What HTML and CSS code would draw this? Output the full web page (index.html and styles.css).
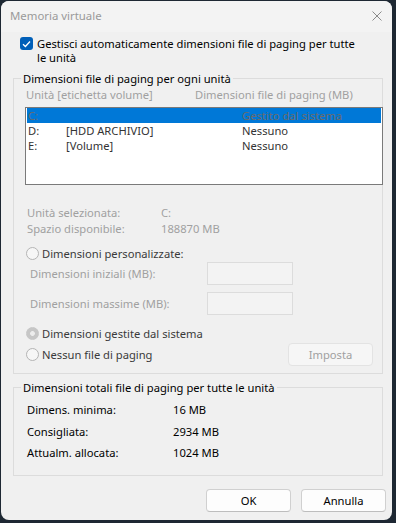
FILE: index.html
```html
<!DOCTYPE html>
<html lang="it">
<head>
    <meta charset="UTF-8">
    <title>Memoria virtuale</title>
    <link rel="stylesheet" href="styles.css">
</head>
<body>

<div class="window">
    <div class="titlebar">
        <span class="title">Memoria virtuale</span>
        <svg class="close" width="10" height="10" viewBox="0 0 10 10">
            <path d="M0.5 0.5 L9.5 9.5 M9.5 0.5 L0.5 9.5" stroke="#8a8a8a" stroke-width="1" fill="none"/>
        </svg>
    </div>

    <div class="content">
        <label class="auto-check">
            <span class="checkbox">
                <svg width="9" height="8" viewBox="0 0 9 8">
                    <path d="M1 4.2 L3.4 6.5 L8 1.5" stroke="#fff" stroke-width="1.3" fill="none"/>
                </svg>
            </span>
            <span>Gestisci automaticamente dimensioni file di paging per tutte le unità</span>
        </label>

        <fieldset class="group group-drives">
            <legend>Dimensioni file di paging per ogni unità</legend>
            <div class="list-head">
                <span class="col-drive">Unità [etichetta volume]</span>
                <span class="col-size">Dimensioni file di paging (MB)</span>
            </div>
            <div class="listbox">
                <div class="row selected">
                    <span class="c-drive">C:</span><span class="c-label"></span><span class="c-size">Gestito dal sistema</span>
                </div>
                <div class="row">
                    <span class="c-drive">D:</span><span class="c-label">[HDD ARCHIVIO]</span><span class="c-size">Nessuno</span>
                </div>
                <div class="row">
                    <span class="c-drive">E:</span><span class="c-label">[Volume]</span><span class="c-size">Nessuno</span>
                </div>
            </div>

            <div class="info">
                <div class="info-row"><span class="info-key">Unità selezionata:</span><span>C:</span></div>
                <div class="info-row"><span class="info-key">Spazio disponibile:</span><span>188870 MB</span></div>
            </div>

            <div class="radio-row first">
                <span class="radio"></span><span class="radio-text">Dimensioni personalizzate:</span>
            </div>
            <div class="field-row">
                <span class="field-label">Dimensioni iniziali (MB):</span><span class="textbox"></span>
            </div>
            <div class="field-row second">
                <span class="field-label">Dimensioni massime (MB):</span><span class="textbox"></span>
            </div>
            <div class="radio-row system">
                <span class="radio on"></span><span class="radio-text">Dimensioni gestite dal sistema</span>
            </div>
            <div class="radio-row last">
                <span class="radio"></span><span class="radio-text">Nessun file di paging</span>
                <button class="btn btn-set" disabled>Imposta</button>
            </div>
        </fieldset>

        <fieldset class="group group-total">
            <legend>Dimensioni totali file di paging per tutte le unità</legend>
            <div class="total-row"><span class="total-key">Dimens. minima:</span><span>16 MB</span></div>
            <div class="total-row"><span class="total-key">Consigliata:</span><span>2934 MB</span></div>
            <div class="total-row"><span class="total-key">Attualm. allocata:</span><span>1024 MB</span></div>
        </fieldset>

        <div class="actions">
            <button class="btn">OK</button>
            <button class="btn">Annulla</button>
        </div>
    </div>
</div>

</body>
</html>
```

FILE: styles.css
```css
body {
    margin: 0;
    background: #1e2833;
    font-family: "Noto Sans", Arial, sans-serif;
    font-size: 11.2px;
    color: #000;
}

.window {
    margin: 1px 0 0 1px;
    width: 391px;
    height: 519px;
    background-color: #f0f0f0;
    border-radius: 8px;
    overflow: hidden;
}

.titlebar {
    height: 31px;
    display: flex;
    align-items: center;
    justify-content: space-between;
    padding: 0 9px 0 9px;
    background-color: #f3f3f3;
    box-sizing: border-box;
    font-size: 11.4px;
}

.title {
    color: #9a9a9a;
    margin-top: -2px;
}

.close {
    margin-right: 1px;
    margin-top: -2px;
}

.content {
    padding: 0 9px 0 12px;
}

.auto-check {
    display: flex;
    align-items: flex-start;
    margin-top: 5px;
    padding-left: 7px;
    line-height: 14px;
    padding-right: 20px;
}

.checkbox {
    flex: none;
    width: 13px;
    height: 13px;
    border-radius: 3px;
    background-color: #005fb8;
    display: flex;
    align-items: center;
    justify-content: center;
    margin-top: 0;
    margin-right: 4px;
}

.group {
    margin: 0;
    border: 1px solid #dcdcdc;
    min-width: 0;
}

.group legend {
    padding: 0 2px;
    margin-left: -6px;
    line-height: 15px;
}

.group-drives {
    margin-top: 6px;
    padding: 1px 0 7px 13px;
}

.list-head {
    display: flex;
    line-height: 15px;
    color: #a0a0a0;
}

.col-drive {
    width: 169px;
    margin-left: -1px;
}

.listbox {
    margin-top: 5px;
    margin-left: -2px;
    width: 358px;
    height: 78px;
    box-sizing: border-box;
    border: 1px solid #7a7a7a;
    background-color: #fff;
    padding: 0 1px 1px;
}

.row {
    display: flex;
    height: 15px;
    line-height: 15px;
    color: #333;
}

.row.selected {
    background-color: #0078d7;
    color: #6b6b6b;
}

.c-drive {
    width: 38px;
    padding-left: 1px;
}

.c-label {
    width: 176px;
}

.info {
    margin-top: 20px;
    color: #a0a0a0;
}

.info-row {
    display: flex;
    line-height: 16px;
}

.info-key {
    width: 134px;
}

.radio-row {
    display: flex;
    align-items: center;
    height: 16px;
    margin-left: -1px;
    color: #3a3a3a;
}

.radio-row.first {
    margin-top: 8px;
}

.radio-row.system {
    margin-top: 10px;
}

.radio-row.last {
    margin-top: 2px;
    height: 23px;
    padding-right: 9px;
}

.radio {
    flex: none;
    width: 11px;
    height: 11px;
    border-radius: 50%;
    border: 1px solid #b4b4b4;
    background-color: #f6f6f6;
    margin-right: 3px;
}

.radio.on {
    border-color: #c6c6c6;
    background: radial-gradient(circle, #ececec 2px, #c6c6c6 2.8px);
}

.field-row {
    display: flex;
    align-items: center;
    height: 23px;
    margin-top: 1px;
    color: #a0a0a0;
}

.field-row.second {
    margin-top: 7px;
}

.field-label {
    width: 177px;
    padding-left: 3px;
}

.textbox {
    width: 86px;
    height: 23px;
    box-sizing: border-box;
    border: 1px solid #dcdcdc;
    background-color: #f3f3f3;
}

.btn {
    font-family: inherit;
    font-size: 11.2px;
    width: 85px;
    height: 23px;
    border: 1px solid #d0d0d0;
    border-bottom-color: #bdbdbd;
    border-radius: 4px;
    background-color: #fdfdfd;
    color: #000;
    padding: 0;
}

.btn-set {
    margin-left: auto;
    border-color: #e3e3e3;
    background-color: #f6f6f6;
    color: #a0a0a0;
}

.group-total {
    margin-top: 6px;
    padding: 4px 0 11px 13px;
}

.total-row {
    display: flex;
    line-height: 21.5px;
}

.total-key {
    width: 146px;
}

.actions {
    display: flex;
    justify-content: flex-end;
    gap: 10px;
    margin-top: 13px;
    margin-right: -3px;
}
```
